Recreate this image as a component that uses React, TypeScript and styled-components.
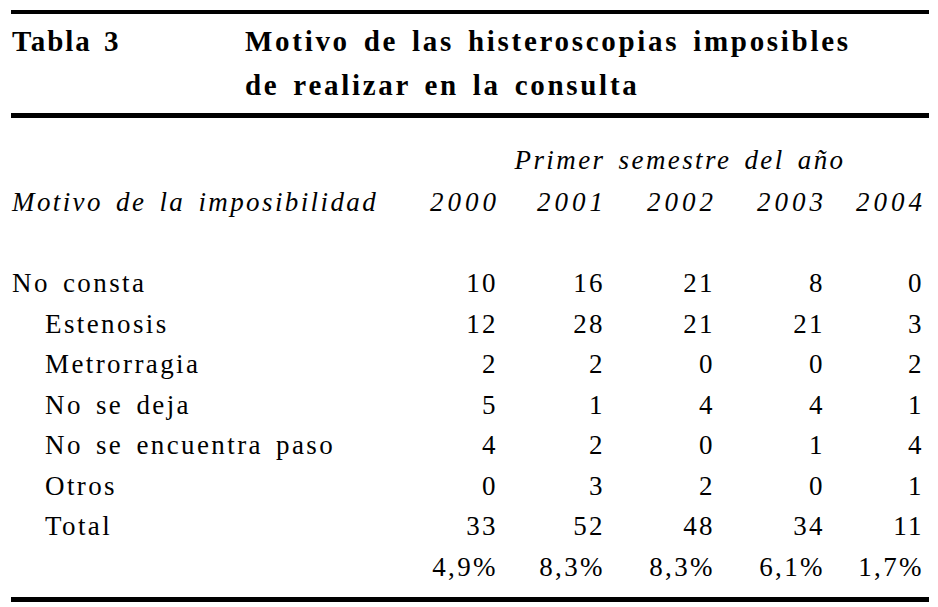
import React from "react";
import styled, { createGlobalStyle } from "styled-components";

const Global = createGlobalStyle`
  html, body { margin: 0; padding: 0; background: #ffffff; }
`;

const Page = styled.div`
  width: 938px;
  height: 607px;
  padding: 10px 9px 0 11px;
  box-sizing: border-box;
  background: #fff;
  color: #000;
  font-family: "Liberation Serif", "Times New Roman", serif;
`;

const Rule = styled.div<{ $h: number; $mt?: number }>`
  height: ${(p) => p.$h}px;
  background: #000;
  margin-top: ${(p) => p.$mt ?? 0}px;
`;

const TitleRow = styled.div`
  display: grid;
  grid-template-columns: 233px 1fr;
  padding: 5px 0 6px 1px;
  font-weight: bold;
  font-size: 29px;
  line-height: 44px;
`;

const TitleLabel = styled.div`
  letter-spacing: 2px;
  word-spacing: 3px;
`;

const TitleText = styled.div`
  letter-spacing: 2.7px;
  word-spacing: 4px;
  white-space: nowrap;
`;

const Table = styled.div`
  display: grid;
  grid-template-columns: 404px 80px 107px 110px 110px 99px;
  padding: 21px 0 0 1px;
  font-size: 27px;
  letter-spacing: 2.4px;
  word-spacing: 4px;
`;

const Span = styled.div`
  grid-column: 2 / 7;
  font-style: italic;
  text-align: center;
  padding-left: 22px;
  line-height: 42px;
  white-space: nowrap;
`;

const HeadCell = styled.div<{ $num?: boolean }>`
  font-style: italic;
  line-height: 42px;
  white-space: nowrap;
  text-align: ${(p) => (p.$num ? "right" : "left")};
  letter-spacing: ${(p) => (p.$num ? "4px" : "2.4px")};
  margin-right: ${(p) => (p.$num ? "-4px" : "0")};
  margin-bottom: 40px;
`;

const Label = styled.div<{ $indent?: boolean }>`
  line-height: 40.5px;
  white-space: nowrap;
  padding-left: ${(p) => (p.$indent ? "33px" : "0")};
`;

const Num = styled.div`
  line-height: 40.5px;
  text-align: right;
  margin-right: -2px;
  white-space: nowrap;
`;

const years = ["2000", "2001", "2002", "2003", "2004"];

const rows: { label: string; indent: boolean; values: string[] }[] = [
  { label: "No consta", indent: false, values: ["10", "16", "21", "8", "0"] },
  { label: "Estenosis", indent: true, values: ["12", "28", "21", "21", "3"] },
  { label: "Metrorragia", indent: true, values: ["2", "2", "0", "0", "2"] },
  { label: "No se deja", indent: true, values: ["5", "1", "4", "4", "1"] },
  { label: "No se encuentra paso", indent: true, values: ["4", "2", "0", "1", "4"] },
  { label: "Otros", indent: true, values: ["0", "3", "2", "0", "1"] },
  { label: "Total", indent: true, values: ["33", "52", "48", "34", "11"] },
  { label: "", indent: true, values: ["4,9%", "8,3%", "8,3%", "6,1%", "1,7%"] },
];

export default function App() {
  return (
    <Page>
      <Global />
      <Rule $h={4} />
      <TitleRow>
        <TitleLabel>Tabla 3</TitleLabel>
        <TitleText>
          Motivo de las histeroscopias imposibles
          <br />
          de realizar en la consulta
        </TitleText>
      </TitleRow>
      <Rule $h={5} />
      <Table>
        <div />
        <Span>Primer semestre del año</Span>
        <HeadCell>Motivo de la imposibilidad</HeadCell>
        {years.map((y) => (
          <HeadCell key={y} $num>
            {y}
          </HeadCell>
        ))}
        {rows.map((r, i) => (
          <React.Fragment key={i}>
            <Label $indent={r.indent}>{r.label}</Label>
            {r.values.map((v, j) => (
              <Num key={j}>{v}</Num>
            ))}
          </React.Fragment>
        ))}
      </Table>
      <Rule $h={5} $mt={10} />
    </Page>
  );
}
